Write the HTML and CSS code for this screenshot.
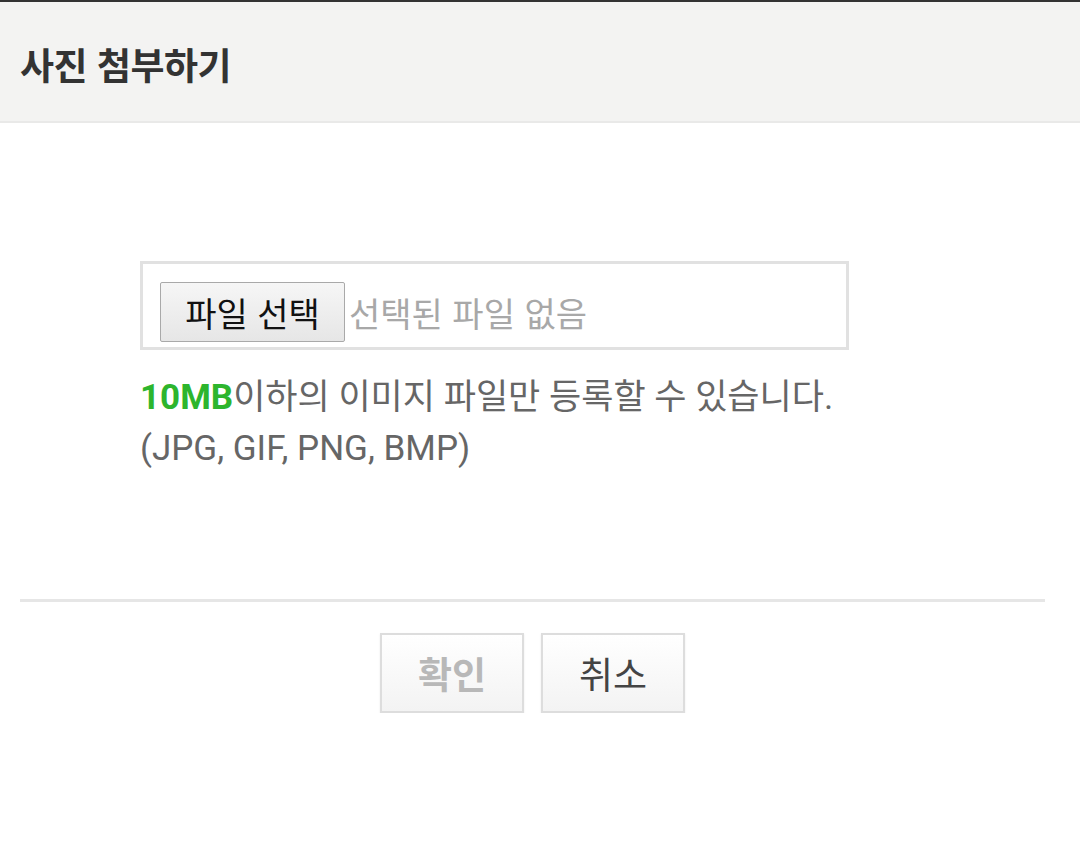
FILE: index.html
```html
<!DOCTYPE html>
<html lang="ko">
<head>
<meta charset="utf-8">
<title>사진 첨부하기</title>
<link rel="stylesheet" href="styles.css">
</head>
<body>
<header class="header">
  <h1 class="title">사진 첨부하기</h1>
</header>
<main class="content">
  <div class="file-box">
    <span class="file-btn">파일 선택</span>
    <span class="file-status">선택된 파일 없음</span>
  </div>
  <p class="note"><strong class="limit">10MB</strong>이하의 이미지 파일만 등록할 수 있습니다.<br>(JPG, GIF, PNG, BMP)</p>
</main>
<div class="divider"></div>
<div class="actions">
  <button class="btn btn-disabled">확인</button>
  <button class="btn">취소</button>
</div>
</body>
</html>
```

FILE: styles.css
```css
html, body {
  margin: 0;
  padding: 0;
  background: #ffffff;
}
body {
  border-top: 2px solid #333333;
  font-family: Roboto, "Noto Sans CJK KR", sans-serif;
  width: 1080px;
}
.header {
  height: 119px;
  background: #f3f3f2;
  border-bottom: 2px solid #e9e9e8;
  display: flex;
  align-items: center;
  padding-left: 20px;
  box-sizing: content-box;
}
.title {
  margin: 4px 0 0 0;
  font-family: "Noto Sans CJK KR", sans-serif;
  font-size: 37px;
  font-weight: 700;
  color: #333333;
  letter-spacing: -0.5px;
}
.content {
  padding: 138px 0 0 140px;
}
.file-box {
  width: 709px;
  height: 89px;
  box-sizing: border-box;
  border: 3px solid #e1e1e1;
  padding: 18px 0 0 17px;
  display: flex;
  align-items: flex-start;
  background: #fff;
}
.file-btn {
  width: 185px;
  height: 60px;
  box-sizing: border-box;
  border: 1px solid #a9a9a9;
  border-radius: 2px;
  background: linear-gradient(#f6f6f6, #e6e6e6);
  display: flex;
  align-items: center;
  justify-content: center;
  font-family: "Noto Sans CJK KR", sans-serif;
  font-size: 34px;
  color: #111111;
}
.file-status {
  height: 60px;
  display: flex;
  align-items: center;
  padding-left: 4px;
  font-family: "Noto Sans CJK KR", sans-serif;
  font-size: 34px;
  color: #a8a8a8;
}
.note {
  margin: 22px 0 0 0;
  font-size: 35px;
  line-height: 51px;
  color: #666666;
}
.limit {
  color: #2db52d;
  font-weight: 700;
}
.divider {
  margin: 125px 0 0 20px;
  width: 1025px;
  height: 3px;
  background: #e6e6e6;
}
.actions {
  width: 1025px;
  margin: 31px 0 0 20px;
  display: flex;
  justify-content: center;
  gap: 17px;
}
.btn {
  width: 144px;
  height: 80px;
  box-sizing: border-box;
  border: 2px solid #dddddd;
  background: linear-gradient(#ffffff, #f3f3f3);
  font-family: "Noto Sans CJK KR", sans-serif;
  font-size: 37px;
  color: #444444;
  padding: 0;
  box-shadow: 0 1px 2px rgba(0,0,0,0.08);
}
.btn-disabled {
  color: #b8b8b8;
  font-weight: 700;
}
```
